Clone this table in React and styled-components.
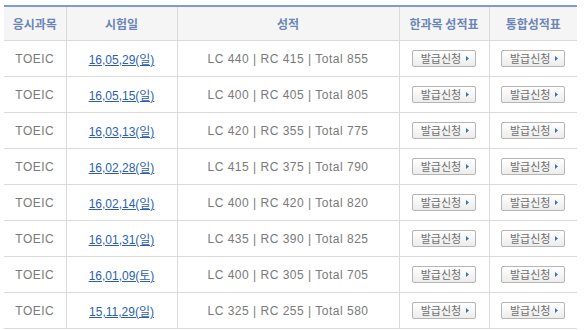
import React from "react";
import styled, { createGlobalStyle } from "styled-components";

const rows = [
	{ subject: "TOEIC", date: "16,05,29(일)", lc: 440, rc: 415, total: 855 },
	{ subject: "TOEIC", date: "16,05,15(일)", lc: 400, rc: 405, total: 805 },
	{ subject: "TOEIC", date: "16,03,13(일)", lc: 420, rc: 355, total: 775 },
	{ subject: "TOEIC", date: "16,02,28(일)", lc: 415, rc: 375, total: 790 },
	{ subject: "TOEIC", date: "16,02,14(일)", lc: 400, rc: 420, total: 820 },
	{ subject: "TOEIC", date: "16,01,31(일)", lc: 435, rc: 390, total: 825 },
	{ subject: "TOEIC", date: "16,01,09(토)", lc: 400, rc: 305, total: 705 },
	{ subject: "TOEIC", date: "15,11,29(일)", lc: 325, rc: 255, total: 580 },
];

const Arrow = () => (
	<svg width="3" height="5" viewBox="0 0 3 5">
		<path d="M0 0 L3 2.5 L0 5 Z" fill="#3b6fc0" />
	</svg>
);

const App = () => {
	return (
		<>
			<GlobalStyle />
			<Wrap>
				<Table>
					<colgroup>
						<col style={{ width: 62 }} />
						<col style={{ width: 111 }} />
						<col style={{ width: 222 }} />
						<col style={{ width: 90 }} />
						<col style={{ width: 88 }} />
					</colgroup>
					<thead>
						<tr>
							<Th>응시과목</Th>
							<Th>시험일</Th>
							<Th>성적</Th>
							<Th>한과목 성적표</Th>
							<Th last>통합성적표</Th>
						</tr>
					</thead>
					<tbody>
						{rows.map((r, i) => (
							<tr key={i}>
								<Td>{r.subject}</Td>
								<Td>
									<DateLink href="#">{r.date}</DateLink>
								</Td>
								<Td>
									LC {r.lc} | RC {r.rc} | Total {r.total}
								</Td>
								<Td>
									<IssueButton>
										발급신청 <Arrow />
									</IssueButton>
								</Td>
								<Td last>
									<IssueButton>
										발급신청 <Arrow />
									</IssueButton>
								</Td>
							</tr>
						))}
					</tbody>
				</Table>
			</Wrap>
		</>
	);
};

export default App;

const GlobalStyle = createGlobalStyle`
	body {
		margin: 0;
		background: #fff;
		font-family: "Liberation Sans", "Noto Sans CJK KR", sans-serif;
	}
`;

const Wrap = styled.div`
	padding: 5px 7px 0 4px;
`;

const Table = styled.table`
	width: 573px;
	border-collapse: collapse;
	table-layout: fixed;
	border-top: 2px solid #7d9ccf;
`;

const Th = styled.th`
	height: 33px;
	padding: 0;
	background: #f5f5f5;
	color: #6a85b8;
	font-size: 12px;
	font-weight: bold;
	font-family: "Noto Sans CJK KR", sans-serif;
	text-align: center;
	border-bottom: 1px solid #dadada;
	border-right: ${(props) => (props.last ? "none" : "1px solid #dadada")};
`;

const Td = styled.td`
	height: 35px;
	padding: 0;
	color: #7a7a7a;
	font-size: 12px;
	letter-spacing: 0.5px;
	text-align: center;
	border-bottom: 1px solid #dadada;
	border-right: ${(props) => (props.last ? "none" : "1px solid #dadada")};
	white-space: nowrap;
`;

const DateLink = styled.a`
	color: #2c5fb3;
	text-decoration: underline;
	font-size: 12px;
	letter-spacing: 0;
`;

const IssueButton = styled.button`
	display: inline-flex;
	align-items: center;
	justify-content: center;
	gap: 5px;
	width: 64px;
	height: 17px;
	padding: 0 0 0 2px;
	border: 1px solid #b5b5b5;
	border-radius: 2px;
	background: linear-gradient(#ffffff, #ececec);
	color: #6f6f6f;
	font-size: 11px;
	letter-spacing: 0;
	font-family: "Noto Sans CJK KR", sans-serif;
	line-height: 1;
	cursor: pointer;
	vertical-align: middle;
`;
